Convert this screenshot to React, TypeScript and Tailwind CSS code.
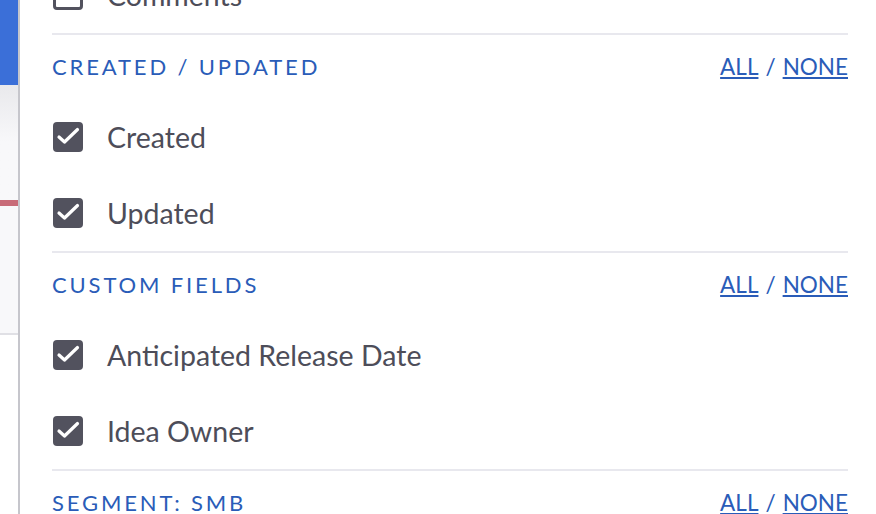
import React from 'react';

interface Section {
    title: string;
    items: { label: string; checked: boolean }[];
}

const sections: Section[] = [
    { title: 'CREATED / UPDATED', items: [{ label: 'Created', checked: true }, { label: 'Updated', checked: true }] },
    { title: 'CUSTOM FIELDS', items: [{ label: 'Anticipated Release Date', checked: true }, { label: 'Idea Owner', checked: true }] },
    { title: 'SEGMENT: SMB', items: [] },
];

const Checkbox: React.FC<{ checked: boolean }> = ({ checked }) =>
    checked ? (
        <span className="block w-[30px] h-[30px] rounded-[4px] bg-[#52525e] shrink-0">
            <svg width="30" height="30" viewBox="0 0 30 30" fill="none">
                <path d="M6 15l5.5 5L24.5 7.5" stroke="#fff" strokeWidth="3.2" strokeLinecap="round" strokeLinejoin="round" />
            </svg>
        </span>
    ) : (
        <span className="block w-[30px] h-[30px] rounded-[4px] border-[3px] border-[#52525e] bg-white shrink-0" />
    );

const Row: React.FC<{ label: string; checked: boolean }> = ({ label, checked }) => (
    <div className="flex items-center h-[76px] pl-px">
        <Checkbox checked={checked} />
        <span className="ml-[24px] text-[28.5px] leading-none text-[#4d4d59]">{label}</span>
    </div>
);

export default function App() {
    return (
        <div className="flex w-[876px] h-[514px] overflow-hidden bg-white" style={{ fontFamily: 'Lato, "Noto Sans", sans-serif' }}>
            {/* left page strip */}
            <div className="w-[18px] shrink-0 flex flex-col">
                <div className="h-[85px] bg-[#3b6fd8]" />
                <div className="h-[115px] bg-gradient-to-b from-[#e9e9ec] via-[#f8f8fa] to-[#f8f8fa]" />
                <div className="h-[6px] bg-[#c86b78]" />
                <div className="h-[127px] bg-[#f8f8fa]" />
                <div className="h-[2px] bg-[#e0e0e5]" />
                <div className="flex-1 bg-white" />
            </div>
            <div className="w-[2px] shrink-0 bg-[#c6c6cc]" />

            {/* drawer */}
            <div className="flex-1 pl-[32px] pr-[28px]">
                <div className="mt-[-43px]">
                    <Row label="Comments" checked={false} />
                    {sections.map((s) => (
                        <div key={s.title}>
                            <div className="h-[2px] bg-[#e8e8ee]" />
                            <div className="flex items-center justify-between h-[64px]">
                                <span className="text-[22px] leading-none tracking-[0.13em] text-[#2a5cb8]">{s.title}</span>
                                <span className="text-[22.5px] leading-none text-[#2a5cb8]">
                                    <a href="#" className="underline underline-offset-2">ALL</a>
                                    <span className="mx-[7px]">/</span>
                                    <a href="#" className="underline underline-offset-2">NONE</a>
                                </span>
                            </div>
                            {s.items.map((it) => (
                                <Row key={it.label} label={it.label} checked={it.checked} />
                            ))}
                        </div>
                    ))}
                </div>
            </div>
        </div>
    );
}
